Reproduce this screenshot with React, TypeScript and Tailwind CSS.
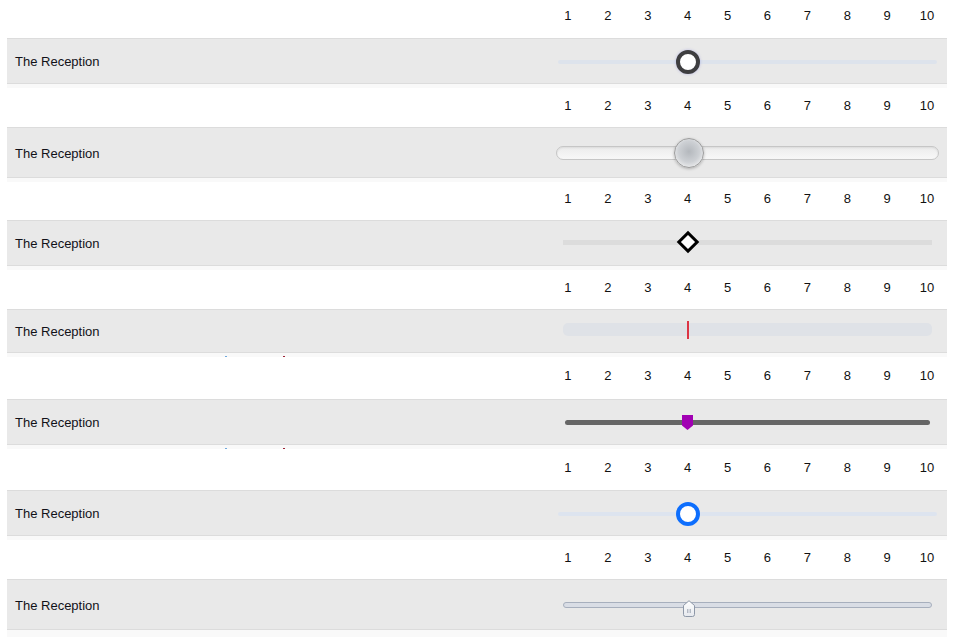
import React from "react";

const NUMBERS = [1, 2, 3, 4, 5, 6, 7, 8, 9, 10];

function Header({heightClass, first, dots}: { heightClass: string; first?: boolean; dots?: boolean }): JSX.Element {
    return (
        <div className={"flex flex-col " + heightClass}>
            {!first && (
                <div className="flex items-end h-[4px] bg-[#f9f9f9]">
                    {dots && <span className="ml-[218px] w-[2px] h-[1px] bg-[#6fa8dc]"/>}
                    {dots && <span className="ml-[56px] w-[2px] h-[1px] bg-[#9b2335]"/>}
                </div>
            )}
            <div className={"flex flex-1 items-center " + (first ? "pb-[6px]" : "pb-[4px]")}>
                <div className="w-[541px]"/>
                <div className="grid grid-cols-10 w-[399px] text-center text-[13px] text-[#111111]">
                    {NUMBERS.map((n) => {
                        return (
                            <span key={n}>{n}</span>
                        )
                    })}
                </div>
            </div>
        </div>
    );
}

function Row({heightClass, children}: { heightClass: string; children: React.ReactNode }): JSX.Element {
    return (
        <div className={"flex items-center border-y border-[#dcdcdc] bg-[#e9e9e9] " + heightClass}>
            <div className="w-[541px] pl-2 mt-[2px] text-[13px] text-[#111118]">The Reception</div>
            <div className="w-[399px] flex items-center">
                {children}
            </div>
        </div>
    );
}

export default function App(): JSX.Element {
    return (
        <div className="ml-[7px] w-[940px] font-['Liberation_Sans',Arial,sans-serif] bg-white">
            {/* 1 - dark ring */}
            <Header heightClass="h-[38px]" first/>
            <Row heightClass="h-[46px]">
                <div className="relative ml-[10px] mt-[2px] w-[379px] h-[4px] rounded-full bg-[#dde3ec]">
                    <div className="absolute left-[118px] top-1/2 -translate-y-1/2 w-[24px] h-[24px] rounded-full border-4 border-[#3e3e40] bg-white shadow-[0_0_3px_rgba(90,90,210,0.35)]"/>
                </div>
            </Row>

            {/* 2 - glossy */}
            <Header heightClass="h-[43px]"/>
            <Row heightClass="h-[51px]">
                <div className="relative ml-[8px] w-[383px] h-[14px] rounded-full border border-[#c6c6c6] bg-[linear-gradient(#ececec,#f8f8f8)] shadow-[inset_0_1px_2px_rgba(0,0,0,0.08)]">
                    <div className="absolute left-[117px] top-1/2 -translate-y-1/2 w-[30px] h-[30px] rounded-full border border-[#9c9c9c] bg-[radial-gradient(circle_at_50%_45%,#b4b8bd_0%,#cdd0d4_50%,#f7f7f7_90%)] shadow-[0_1px_3px_rgba(0,0,0,0.25)]"/>
                </div>
            </Row>

            {/* 3 - diamond */}
            <Header heightClass="h-[42px]"/>
            <Row heightClass="h-[46px]">
                <div className="relative ml-[15px] mt-[-2px] w-[369px] h-[5px] bg-[#dcdcdc]">
                    <div className="absolute left-[117px] top-1/2 -translate-y-1/2 rotate-45 w-[16px] h-[16px] border-[3px] border-black bg-white"/>
                </div>
            </Row>

            {/* 4 - red line */}
            <Header heightClass="h-[43px]"/>
            <Row heightClass="h-[44px]">
                <div className="relative ml-[15px] mt-[-3px] w-[369px] h-[13px] rounded-[5px] bg-[#dfe2e7]">
                    <div className="absolute left-[124px] top-1/2 -translate-y-1/2 w-[2px] h-[18px] bg-[#dc3545]"/>
                </div>
            </Row>

            {/* 5 - purple marker */}
            <Header heightClass="h-[46px]" dots/>
            <Row heightClass="h-[46px]">
                <div className="relative ml-[17px] w-[365px] h-[5px] rounded-full bg-[#666666]">
                    <svg className="absolute left-[117px] top-[-5px]" width="11" height="15" viewBox="0 0 11 15">
                        <path d="M0 0 H11 V10.5 L5.5 15 L0 10.5 Z" fill="#a100b3"/>
                    </svg>
                </div>
            </Row>

            {/* 6 - blue ring */}
            <Header heightClass="h-[45px]" dots/>
            <Row heightClass="h-[46px]">
                <div className="relative ml-[10px] mt-[1px] w-[379px] h-[4px] rounded-full bg-[#dde4ef]">
                    <div className="absolute left-[118px] top-1/2 -translate-y-1/2 w-[24px] h-[24px] rounded-full border-4 border-[#0d6efd] bg-white"/>
                </div>
            </Row>

            {/* 7 - house thumb */}
            <Header heightClass="h-[43px]"/>
            <Row heightClass="h-[51px]">
                <div className="relative ml-[15px] w-[369px] h-[6px] rounded-full border border-[#a7afbd] bg-[#d9dde5]">
                    <svg className="absolute left-[119px] top-[-3px]" width="12" height="17" viewBox="0 0 12 17">
                        <defs>
                            <linearGradient id="thumbGrad" x1="0" y1="0" x2="0" y2="1">
                                <stop offset="0" stopColor="#ffffff"/>
                                <stop offset="1" stopColor="#e6e9ee"/>
                            </linearGradient>
                        </defs>
                        <path d="M0.5 5.5 L6 0.7 L11.5 5.5 V14.5 Q11.5 16.5 9.5 16.5 H2.5 Q0.5 16.5 0.5 14.5 Z" fill="url(#thumbGrad)" stroke="#8e98a8"/>
                        <line x1="4.8" y1="9" x2="4.8" y2="13" stroke="#9aa2b0"/>
                        <line x1="7.2" y1="9" x2="7.2" y2="13" stroke="#9aa2b0"/>
                    </svg>
                </div>
            </Row>
            <div className="h-[7px] bg-[#f9f9f9]"/>
        </div>
    );
}
